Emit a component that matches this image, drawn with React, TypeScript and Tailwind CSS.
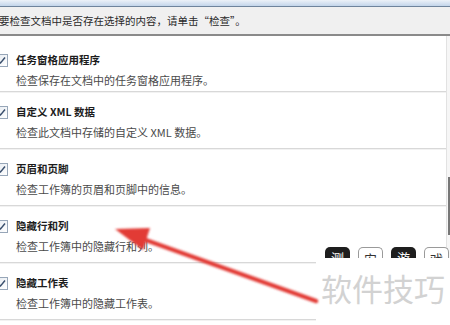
import React from "react";

const items = [
  { title: "任务窗格应用程序", desc: "检查保存在文档中的任务窗格应用程序。" },
  { title: "自定义 XML 数据", desc: "检查此文档中存储的自定义 XML 数据。" },
  { title: "页眉和页脚", desc: "检查工作簿的页眉和页脚中的信息。" },
  { title: "隐藏行和列", desc: "检查工作簿中的隐藏行和列。" },
  { title: "隐藏工作表", desc: "检查工作簿中的隐藏工作表。" },
];

const font = { fontFamily: '"Noto Sans CJK SC", "Noto Sans", sans-serif' };

const CheckBox = () => (
  <div className="absolute left-[-5px] top-[1px] w-[13px] h-[13px] border border-[#97a6b8] bg-gradient-to-br from-[#e6ebf1] to-white flex items-center justify-center">
    <svg width="9" height="9" viewBox="0 0 9 9">
      <path d="M1 4.5 L3.5 7 L8 1.5" fill="none" stroke="#3a4f6d" strokeWidth="1.5" />
    </svg>
  </div>
);

const Item = ({ title, desc, first }: { title: string; desc: string; first?: boolean }) => (
  <div
    className={`relative flex flex-col border-b border-[#d8d8d8] shadow-[0_1px_0_#f2f2f2] ${
      first ? "h-[56px] pt-[17px]" : "h-[57px] pt-[13px]"
    }`}
  >
    <div className="relative h-[14px]">
      <CheckBox />
      <div className="pl-[16px] text-[10.5px] leading-[14px] font-bold text-[#1c1c1c]">{title}</div>
    </div>
    <div className="mt-[6px] pl-[16px] text-[11px] leading-[14px] text-[#4a4a4a]">{desc}</div>
  </div>
);

export default function App() {
  return (
    <div className="relative w-[450px] h-[325px] overflow-hidden bg-white" style={font}>
      <div className="h-[7px] bg-gradient-to-b from-[#edf2f8] to-[#c3d5ea] border-b border-[#6f849c]" />
      <div className="h-[27px] bg-[#f0f0f0] flex items-center text-[10.5px] text-[#2a2a2a] whitespace-nowrap">
        <span className="-ml-[1px]">要检查文档中是否存在选择的内容，请单击“检查”。</span>
      </div>
      <div className="h-[2px] bg-[#8a8a8a]" />
      <div className="flex">
        <div className="flex-1 flex flex-col">
          {items.map((it, i) => (
            <Item key={i} title={it.title} desc={it.desc} first={i === 0} />
          ))}
        </div>
        <div className="relative w-[4px] border-l border-[#e2e2e2] bg-[#f6f6f6]">
          <div className="absolute left-[1px] top-[141px] h-[58px] w-[2px] bg-[#777]" />
        </div>
      </div>

      {/* watermark */}
      <div className="absolute left-[316px] top-[258px] w-[140px] h-[70px] bg-white" />
      <div className="absolute left-[325px] top-[247px] flex gap-[8px]">
        {["测", "安", "游", "戏"].map((c, i) => (
          <div
            key={i}
            className={`w-[25px] h-[11px] overflow-hidden rounded-t-[5px] text-[13px] leading-[22px] text-center ${
              i % 2 === 0 ? "bg-[#1e1e1e] text-white" : "bg-white border border-b-0 border-[#9a9a9a] text-[#333]"
            }`}
          >
            {c}
          </div>
        ))}
      </div>
      <div className="absolute left-[321px] top-[268px] text-[31px] leading-[40px] text-[#d2d2d2]">
        软件技巧
      </div>

      {/* red arrow */}
      <svg className="absolute left-0 top-0" width="450" height="325">
        <defs>
          <filter id="glow" x="-20%" y="-20%" width="140%" height="140%">
            <feGaussianBlur stdDeviation="0.8" />
          </filter>
        </defs>
        <g filter="url(#glow)">
          <line x1={316} y1={301} x2={140} y2={238} stroke="#e23a36" strokeWidth="4.5" strokeLinecap="round" />
          <polygon points="115,229 150,228 143,250" fill="#e23a36" />
        </g>
      </svg>
    </div>
  );
}
